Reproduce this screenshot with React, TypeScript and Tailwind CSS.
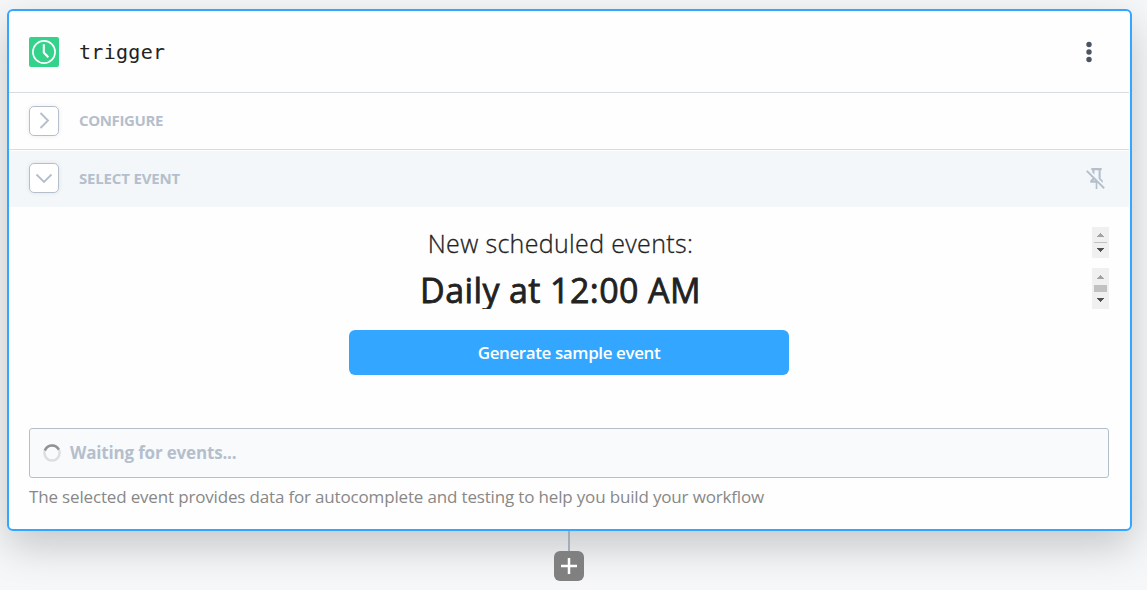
import React from "react";

function Scroller({ className, thumb }: { className: string; thumb: string }) {
  return (
    <div className={`flex w-[17px] flex-col items-center bg-[#f0f0f0] ${className}`}>
      <svg width="7" height="4" viewBox="0 0 7 4" shapeRendering="crispEdges" fill="#a3a3a3">
        <path d="M3 0h1v1h1v1h1v1h1v1H0V3h1V2h1V1h1z" />
      </svg>
      <div className={`w-[13px] bg-[#c1c1c1] ${thumb}`} />
      <svg width="7" height="4" viewBox="0 0 7 4" shapeRendering="crispEdges" fill="#505050">
        <path d="M0 0h7v1H6v1H5v1H4v1H3V3H2V2H1V1H0z" />
      </svg>
    </div>
  );
}

function Toggle({ open }: { open?: boolean }) {
  return (
    <button className="flex size-[30px] items-center justify-center rounded-[5px] border border-[#b5bfcc] bg-white shadow-[0_0_5px_rgba(0,0,0,0.08)]">
      <svg width="28" height="28" viewBox="0 0 28 28" fill="none" stroke="#b5bfcc" strokeWidth="1.9">
        <path d={open ? "M6.5 10.5L14 18l7.5-7.5" : "M10.5 6l7.5 7.5-7.5 7.5"} />
      </svg>
    </button>
  );
}

export default function App() {
  return (
    <div className="h-[590px] w-[1147px] overflow-hidden bg-[#f5f7f9] pt-[9px] pl-[7px] font-['Open_Sans',sans-serif]">
      <section className="flex h-[522px] w-[1125px] flex-col rounded-md border-2 border-[#33a7ff] bg-[#fefefe] pr-px shadow-[0_15px_40px_rgba(0,0,0,0.2)]">
        <header className="flex h-[82px] shrink-0 items-center border-b border-[#d8dce1] pl-5 pr-[34px]">
          <svg width="30" height="30" viewBox="0 0 30 30" fill="none" stroke="#fff">
            <rect width="30" height="30" rx="2" fill="#34d28b" stroke="none" />
            <circle cx="15" cy="15" r="11.1" strokeWidth="1.6" />
            <path d="M14.8 7.2v8.3l4.5 4.7" strokeWidth="2.1" />
          </svg>
          <h1 className="ml-5 flex-1 font-['DejaVu_Sans_Mono',monospace] text-[20px] leading-[30px] tracking-[0.3px] text-[#222]">trigger</h1>
          <svg width="12" height="24" viewBox="0 0 12 24" fill="#4c5461">
            <circle cx="6" cy="4.5" r="2.7" />
            <circle cx="6" cy="12" r="2.7" />
            <circle cx="6" cy="19.5" r="2.7" />
          </svg>
        </header>

        <div className="flex h-[57px] shrink-0 items-center gap-5 border-b border-[#d8dce1] pl-5">
          <Toggle />
          <span className="pb-0.5 text-[15px] font-bold tracking-[-0.36px] text-[#b5bfcc]">CONFIGURE</span>
        </div>
        <div className="mt-px flex h-[56px] shrink-0 items-center bg-[#f3f7fa] pb-0.5 pl-5 pr-[20px]">
          <Toggle open />
          <span className="ml-5 flex-1 text-[15px] font-bold tracking-[-0.18px] text-[#b5bfcc]">SELECT EVENT</span>
          <svg width="25" height="25" viewBox="0 0 24 24" fill="#b5bfcc">
            <path d="M8,6.2V4H7V2H17V4H16V12L18,14V16H17.8L14,12.2V4H10V8.2L8,6.2M20,20.7L18.7,22L12.8,16.1V22H11.2V16H6V14L8,12V11.3L2,5.3L3.3,4L20,20.7M8.8,14H10.6L9.7,13.1L8.8,14Z" />
          </svg>
        </div>

        <div className="flex flex-col pl-5 pr-5 pt-5">
          <div className="flex h-[31px] items-start">
            <h2 className="flex-1 text-center text-[25px] leading-[32px] font-light tracking-[0.34px] text-[#222] [-webkit-text-stroke:0.3px_#222]">New scheduled events:</h2>
            <Scroller className="h-[31px] pt-[6px]" thumb="mt-[5px] mb-[5px] h-px" />
          </div>
          <div className="mt-[10px] flex h-[41px] items-start overflow-hidden">
            <p className="flex-1 text-center text-[34px] leading-[44px] tracking-[0.4px] text-[#222] [-webkit-text-stroke:0.8px_#222]">Daily at 12:00 AM</p>
            <Scroller className="h-[41px] pt-[7px]" thumb="mt-[6px] mb-[6px] h-[7px]" />
          </div>
          <button className="mt-[21px] h-[45px] w-[440px] self-center rounded-md bg-[#33a7ff] text-[17px] font-semibold tracking-[-0.4px] text-white">
            Generate sample event
          </button>
          <div className="mt-[53px] flex h-[50px] items-center rounded-[3px] border border-[#b5bfcc] bg-[#f9fafc] pl-[13px]">
            <svg width="18" height="18" viewBox="0 0 18 18" fill="none" strokeWidth="2.5">
              <circle cx="9" cy="9" r="7.6" stroke="#dedede" />
              <path d="M1.9 6.5A7.6 7.6 0 0 1 15.8 5.6" stroke="#929292" />
            </svg>
            <span className="ml-[9px] text-[17px] font-bold tracking-[-0.18px] text-[#b5bfcc]">Waiting for events...</span>
          </div>
          <p className="mt-[7px] text-[17px] leading-6 tracking-[-0.165px] whitespace-nowrap text-[#888]">
            The selected event provides data for autocomplete and testing to help you build your workflow
          </p>
        </div>
      </section>
      <div className="flex w-[1124px] flex-col items-center">
        <div className="h-5 w-[2px] bg-[#a4acb8]" />
        <button className="flex size-[30px] items-center justify-center rounded-md bg-[#808080]">
          <svg width="16" height="16" viewBox="0 0 16 16" stroke="#fff" strokeWidth="2.5">
            <path d="M8 0v16M0 8h16" />
          </svg>
        </button>
      </div>
    </div>
  );
}
